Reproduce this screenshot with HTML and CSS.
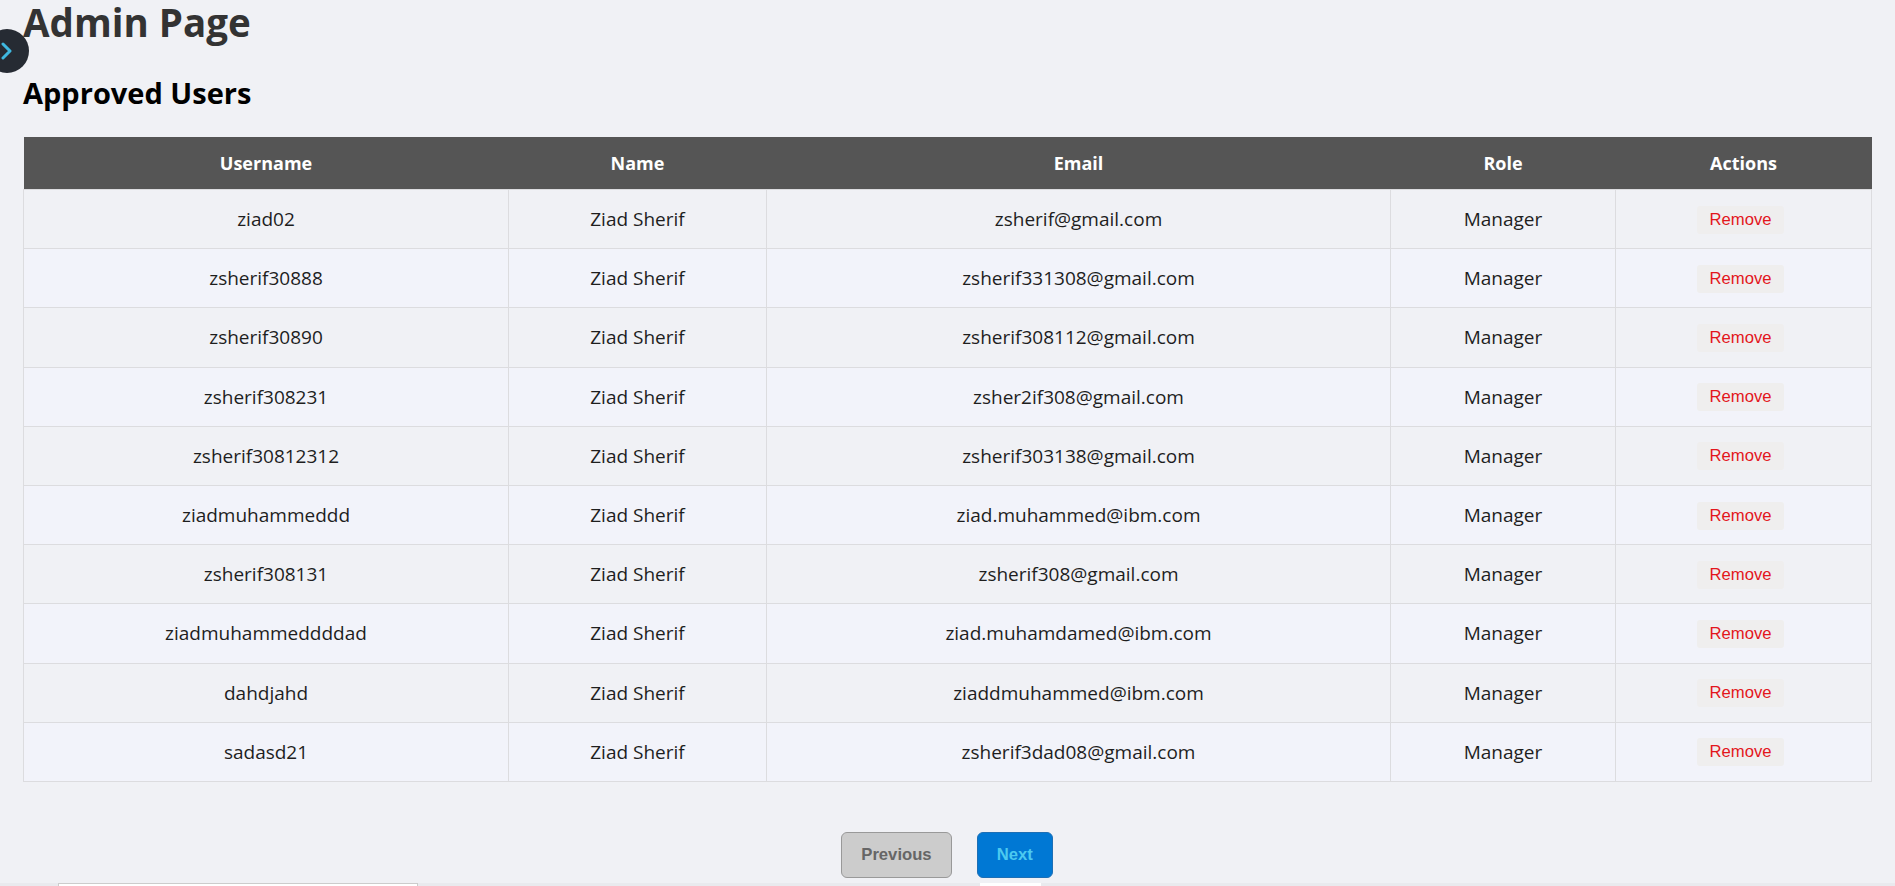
FILE: index.html
```html
<!DOCTYPE html>
<html lang="en">
<head>
    <meta charset="UTF-8">
    <meta name="viewport" content="width=device-width, initial-scale=1.0">
    <title>Admin Page</title>
    <link rel="stylesheet" href="styles.css">
</head>
<body>
    <button class="sidebar-toggle" aria-label="Open sidebar">
        <svg viewBox="0 0 12 18" width="12" height="18">
            <path d="M2 2 L9 9 L2 16" fill="none" stroke="#3fb8e0" stroke-width="3" stroke-linecap="round" stroke-linejoin="round"/>
        </svg>
    </button>

    <h1 class="page-title">Admin Page</h1>
    <h2 class="section-title">Approved Users</h2>

    <table class="users-table">
        <colgroup>
            <col class="col-username">
            <col class="col-name">
            <col class="col-email">
            <col class="col-role">
            <col class="col-actions">
        </colgroup>
        <thead>
            <tr>
                <th>Username</th>
                <th>Name</th>
                <th>Email</th>
                <th>Role</th>
                <th>Actions</th>
            </tr>
        </thead>
        <tbody>
            <tr>
                <td>ziad02</td>
                <td>Ziad Sherif</td>
                <td>zsherif@gmail.com</td>
                <td>Manager</td>
                <td><button class="remove-button">Remove</button></td>
            </tr>
            <tr>
                <td>zsherif30888</td>
                <td>Ziad Sherif</td>
                <td>zsherif331308@gmail.com</td>
                <td>Manager</td>
                <td><button class="remove-button">Remove</button></td>
            </tr>
            <tr>
                <td>zsherif30890</td>
                <td>Ziad Sherif</td>
                <td>zsherif308112@gmail.com</td>
                <td>Manager</td>
                <td><button class="remove-button">Remove</button></td>
            </tr>
            <tr>
                <td>zsherif308231</td>
                <td>Ziad Sherif</td>
                <td>zsher2if308@gmail.com</td>
                <td>Manager</td>
                <td><button class="remove-button">Remove</button></td>
            </tr>
            <tr>
                <td>zsherif30812312</td>
                <td>Ziad Sherif</td>
                <td>zsherif303138@gmail.com</td>
                <td>Manager</td>
                <td><button class="remove-button">Remove</button></td>
            </tr>
            <tr>
                <td>ziadmuhammeddd</td>
                <td>Ziad Sherif</td>
                <td>ziad.muhammed@ibm.com</td>
                <td>Manager</td>
                <td><button class="remove-button">Remove</button></td>
            </tr>
            <tr>
                <td>zsherif308131</td>
                <td>Ziad Sherif</td>
                <td>zsherif308@gmail.com</td>
                <td>Manager</td>
                <td><button class="remove-button">Remove</button></td>
            </tr>
            <tr>
                <td>ziadmuhammeddddad</td>
                <td>Ziad Sherif</td>
                <td>ziad.muhamdamed@ibm.com</td>
                <td>Manager</td>
                <td><button class="remove-button">Remove</button></td>
            </tr>
            <tr>
                <td>dahdjahd</td>
                <td>Ziad Sherif</td>
                <td>ziaddmuhammed@ibm.com</td>
                <td>Manager</td>
                <td><button class="remove-button">Remove</button></td>
            </tr>
            <tr>
                <td>sadasd21</td>
                <td>Ziad Sherif</td>
                <td>zsherif3dad08@gmail.com</td>
                <td>Manager</td>
                <td><button class="remove-button">Remove</button></td>
            </tr>
        </tbody>
    </table>

    <div class="pagination">
        <button class="page-button prev-button">Previous</button>
        <button class="page-button next-button">Next</button>
    </div>

    <div class="below-fold">
        <div class="search-box"></div>
        <div class="below-block"></div>
    </div>
</body>
</html>
```

FILE: styles.css
```css
body {
    background-color: #f0f1f5;
    color: #1e1e1e;
    font-family: "Open Sans", "Noto Sans", sans-serif;
    margin: 0;
    padding: 0 24px 0 23px;
    overflow: hidden;
}

.sidebar-toggle {
    position: fixed;
    left: -15px;
    top: 29px;
    width: 44px;
    height: 44px;
    border: none;
    border-radius: 50%;
    background-color: #262b33;
    padding: 0 0 0 16px;
    display: flex;
    align-items: center;
    cursor: pointer;
}

.page-title {
    margin: 0;
    padding-top: 2px;
    font-size: 38.5px;
    line-height: 40px;
    font-weight: 700;
    color: #333;
}

.section-title {
    margin: 36px 0 29px;
    font-size: 29px;
    line-height: 30px;
    font-weight: 700;
    color: #000;
}

.users-table {
    width: 100%;
    border-collapse: collapse;
    table-layout: fixed;
}

.col-username { width: 485px; }
.col-name { width: 258px; }
.col-email { width: 624px; }
.col-role { width: 225px; }
.col-actions { width: 256px; }

.users-table th {
    background-color: #555;
    color: #fff;
    font-size: 18px;
    font-weight: 700;
    height: 52px;
    padding: 0 12px;
    text-align: center;
}

.users-table td {
    border: 1px solid #dcdcdf;
    font-size: 19px;
    height: 58.2px;
    padding: 0 12px;
    text-align: center;
    vertical-align: middle;
}

.users-table tbody tr:nth-child(even) {
    background-color: #f2f3fa;
}

.remove-button {
    background-color: #efeeee;
    border: none;
    border-radius: 3px;
    color: #e3161c;
    font-family: "Liberation Sans", Arial, sans-serif;
    font-size: 16.67px;
    padding: 4px 12px;
    margin-right: 6px;
    cursor: pointer;
}

.pagination {
    display: flex;
    justify-content: center;
    gap: 25px;
    margin-top: 50px;
}

.page-button {
    font-family: "Liberation Sans", Arial, sans-serif;
    font-size: 16.67px;
    font-weight: 700;
    height: 46px;
    padding: 0 19px;
    border-radius: 6px;
    cursor: pointer;
}

.prev-button {
    background-color: #ccc;
    border: 1px solid #999;
    color: #666;
}

.next-button {
    background-color: #0078d4;
    border: 1px solid #1d6fb5;
    color: #4cc9f0;
}

.below-fold {
    margin: 5px -24px 0 -23px;
    height: 40px;
    background-color: #e9eaee;
    position: relative;
}

.search-box {
    position: absolute;
    left: 58px;
    top: 0;
    width: 358px;
    height: 40px;
    background-color: #fff;
    border: 1px solid #ccc;
}

.below-block {
    position: absolute;
    left: 980px;
    top: 0;
    width: 61px;
    height: 40px;
    background-color: #fff;
}
```
